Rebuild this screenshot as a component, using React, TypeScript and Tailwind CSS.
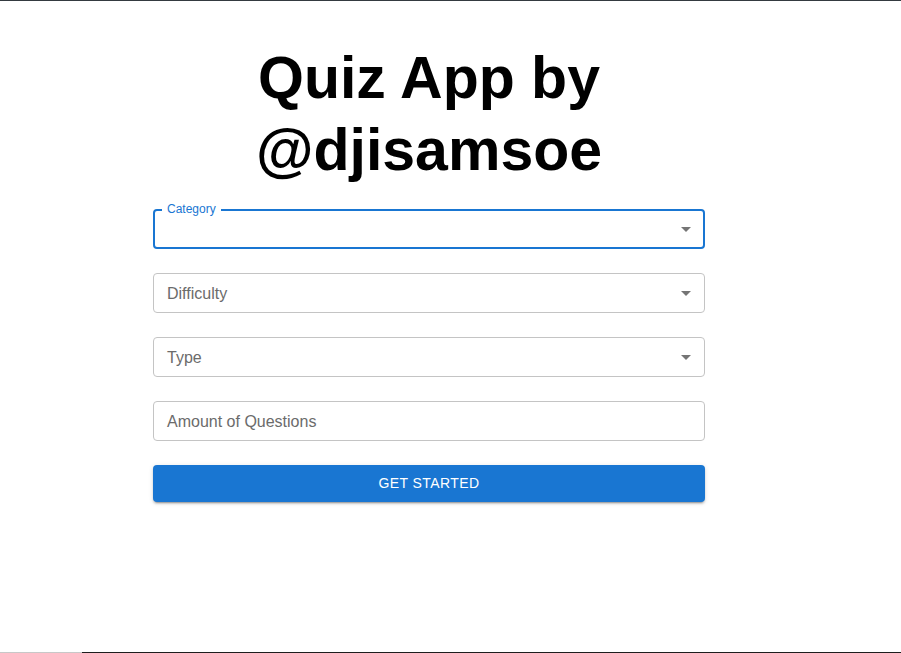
function ArrowDrop() {
  return (
    <svg viewBox="0 0 24 24" className="w-6 h-6 fill-[rgba(0,0,0,0.54)]">
      <path d="M7 10l5 5 5-5z" />
    </svg>
  );
}

function SelectField({ label }: { label: string }) {
  return (
    <div className="h-10 flex items-center justify-between rounded border border-[#c4c4c4] pl-[13px] pr-[6px]">
      <span className="text-base text-[#6b6b6b] pt-px">{label}</span>
      <ArrowDrop />
    </div>
  );
}

export default function App() {
  return (
    <div
      className="h-[653px] flex flex-col bg-white border-t border-[#343a40]"
      style={{ fontFamily: '"Liberation Sans", Arial, sans-serif' }}
    >
      <div className="flex-1 pt-[41px]">
        <div className="ml-[153px] w-[552px]">
          <h1 className="text-center text-[59px] leading-[72px] font-bold text-black px-[80px]">
            Quiz App by @djisamsoe
          </h1>
          <form className="mt-[23px] flex flex-col gap-6">
            <div className="relative h-10 flex items-center justify-end rounded border-2 border-[#1976d2] pr-[5px]">
              <span className="absolute left-[7px] top-[-8px] bg-white px-[5px] text-xs leading-3 text-[#1976d2]">
                Category
              </span>
              <ArrowDrop />
            </div>
            <SelectField label="Difficulty" />
            <SelectField label="Type" />
            <div className="h-10 flex items-center rounded border border-[#c4c4c4] pl-[13px]">
              <span className="text-base text-[#6b6b6b] pt-px">Amount of Questions</span>
            </div>
            <button
              type="button"
              className="h-[37px] pb-[2px] rounded bg-[#1976d2] text-white text-sm uppercase tracking-[0.4px] shadow-[0_3px_1px_-2px_rgba(0,0,0,0.2),0_2px_2px_0_rgba(0,0,0,0.14),0_1px_5px_0_rgba(0,0,0,0.12)]"
            >
              Get Started
            </button>
          </form>
        </div>
      </div>
      <div className="flex h-px">
        <div className="w-[82px] bg-[#c8c8c8]" />
        <div className="flex-1 bg-[#1e1e1e]" />
      </div>
    </div>
  );
}
